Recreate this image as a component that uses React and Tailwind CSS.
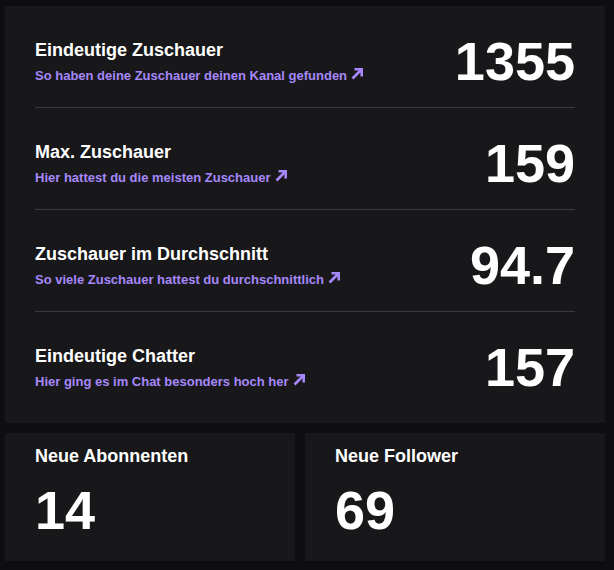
const rows = [
    { title: "Eindeutige Zuschauer", hint: "So haben deine Zuschauer deinen Kanal gefunden", value: "1355" },
    { title: "Max. Zuschauer", hint: "Hier hattest du die meisten Zuschauer", value: "159" },
    { title: "Zuschauer im Durchschnitt", hint: "So viele Zuschauer hattest du durchschnittlich", value: "94.7" },
    { title: "Eindeutige Chatter", hint: "Hier ging es im Chat besonders hoch her", value: "157" },
];

function ArrowUpRight() {
    return (
        <svg width="13" height="13" viewBox="0 0 13 13" className="inline-block align-baseline ml-[4px]"
            fill="none" stroke="currentColor" strokeWidth="2.6">
            <path d="M1.5 11.5 L10.5 2.5" />
            <path d="M3.5 2.3 H10.7 V9.5" />
        </svg>
    );
}

function StatRow({ title, hint, value, last }) {
    return (
        <div className={`flex items-start justify-between pt-[27px] ${last ? "h-[101px]" : "h-[102px] border-b border-[#3a3a3d]"}`}>
            <div className="mt-[6px]">
                <div className="text-[18px] leading-[22px] font-bold text-white">{title}</div>
                <div className="mt-[6px] text-[13px] leading-[16px] font-bold text-[#a688fa]">
                    {hint}
                    <ArrowUpRight />
                </div>
            </div>
            <div className="pt-[1px] text-[54px] leading-none font-bold text-white">{value}</div>
        </div>
    );
}

function SmallCard({ title, value }) {
    return (
        <div className="bg-[#18181b] h-[128px] pt-[12px] px-[30px]">
            <div className="text-[18px] leading-[22px] font-bold text-white">{title}</div>
            <div className="mt-[16px] text-[54px] leading-none font-bold text-white">{value}</div>
        </div>
    );
}

export default function App() {
    return (
        <div className="min-h-[570px] bg-[#0e0e10] pl-[5px] pt-[6px] [font-family:'Liberation_Sans',Arial,sans-serif]">
            <div className="w-[600px] flex flex-col gap-[10px]">
                <div className="bg-[#18181b] px-[30px] pb-[10px]">
                    {rows.map((r, i) => (
                        <StatRow key={r.title} {...r} last={i === rows.length - 1} />
                    ))}
                </div>
                <div className="grid grid-cols-[290px_300px] gap-[10px]">
                    <SmallCard title="Neue Abonnenten" value="14" />
                    <SmallCard title="Neue Follower" value="69" />
                </div>
            </div>
        </div>
    );
}
